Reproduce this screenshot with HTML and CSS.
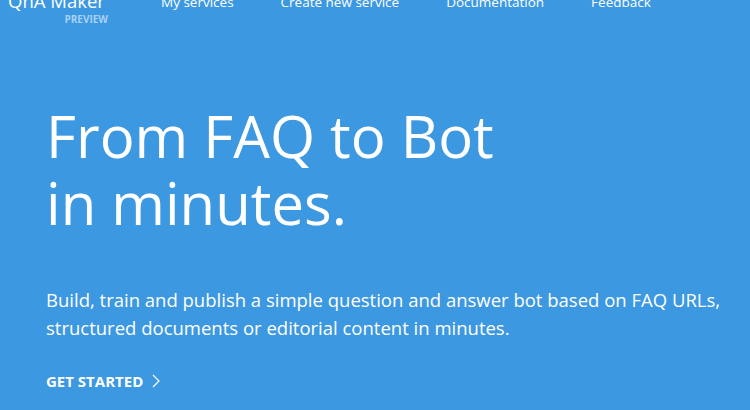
FILE: index.html
```html
<!doctype html>
<html>
    <head>
        <title>QnA Maker</title>
        <link rel="stylesheet" href="styles.css">
    </head>
    <body>
        <div class="page">
            <!-- Top bar -->
            <div class="topbar">
                <div class="brand">
                    <span class="brand-name">QnA Maker</span>
                    <span class="brand-tag">PREVIEW</span>
                </div>
                <div class="nav">
                    <a class="nav-link">My services</a>
                    <a class="nav-link">Create new service</a>
                    <a class="nav-link">Documentation</a>
                    <a class="nav-link">Feedback</a>
                </div>
            </div>

            <!-- Hero -->
            <div class="hero">
                <h1>From FAQ to Bot<br>in minutes.</h1>
                <p class="lead">Build, train and publish a simple question and answer bot based on FAQ URLs, structured documents or editorial content in minutes.</p>
                <a class="cta">GET STARTED
                    <svg class="cta-arrow" width="8" height="14" viewBox="0 0 8 14"><path d="M1 1 L7 7 L1 13" fill="none" stroke="#fff" stroke-width="1.2"/></svg>
                </a>
            </div>
        </div>
    </body>
</html>
```
FILE: styles.css
```css
body {
    margin: 0;
    background-color: #3b98e1;
    font-family: "Open Sans", "Noto Sans", sans-serif;
    color: #fff;
    overflow: hidden;
}

.page {
    height: 410px;
}

.topbar {
    display: flex;
    align-items: flex-start;
    margin-top: -11px;
    padding-left: 8px;
}

.brand {
    display: flex;
    flex-direction: column;
    align-items: flex-end;
    width: 100px;
}

.brand-name {
    font-size: 18.5px;
    line-height: 24px;
    align-self: flex-start;
    white-space: nowrap;
}

.brand-tag {
    font-size: 10px;
    font-weight: 700;
    color: #a9d1f2;
    line-height: 12px;
}

.nav {
    display: flex;
    gap: 47px;
    margin-left: 53px;
}

.nav-link {
    font-size: 13.5px;
    line-height: 24px;
    padding-top: 1px;
}

.hero {
    padding: 77px 0 0 46px;
}

h1 {
    font-size: 58px;
    font-weight: 400;
    line-height: 67px;
    margin: 0;
}

.lead {
    font-size: 18.5px;
    line-height: 28px;
    margin: 50px 0 0;
    width: 700px;
}

.cta {
    display: flex;
    align-items: center;
    gap: 9px;
    margin-top: 29px;
    font-size: 15px;
    font-weight: 700;
}
```
